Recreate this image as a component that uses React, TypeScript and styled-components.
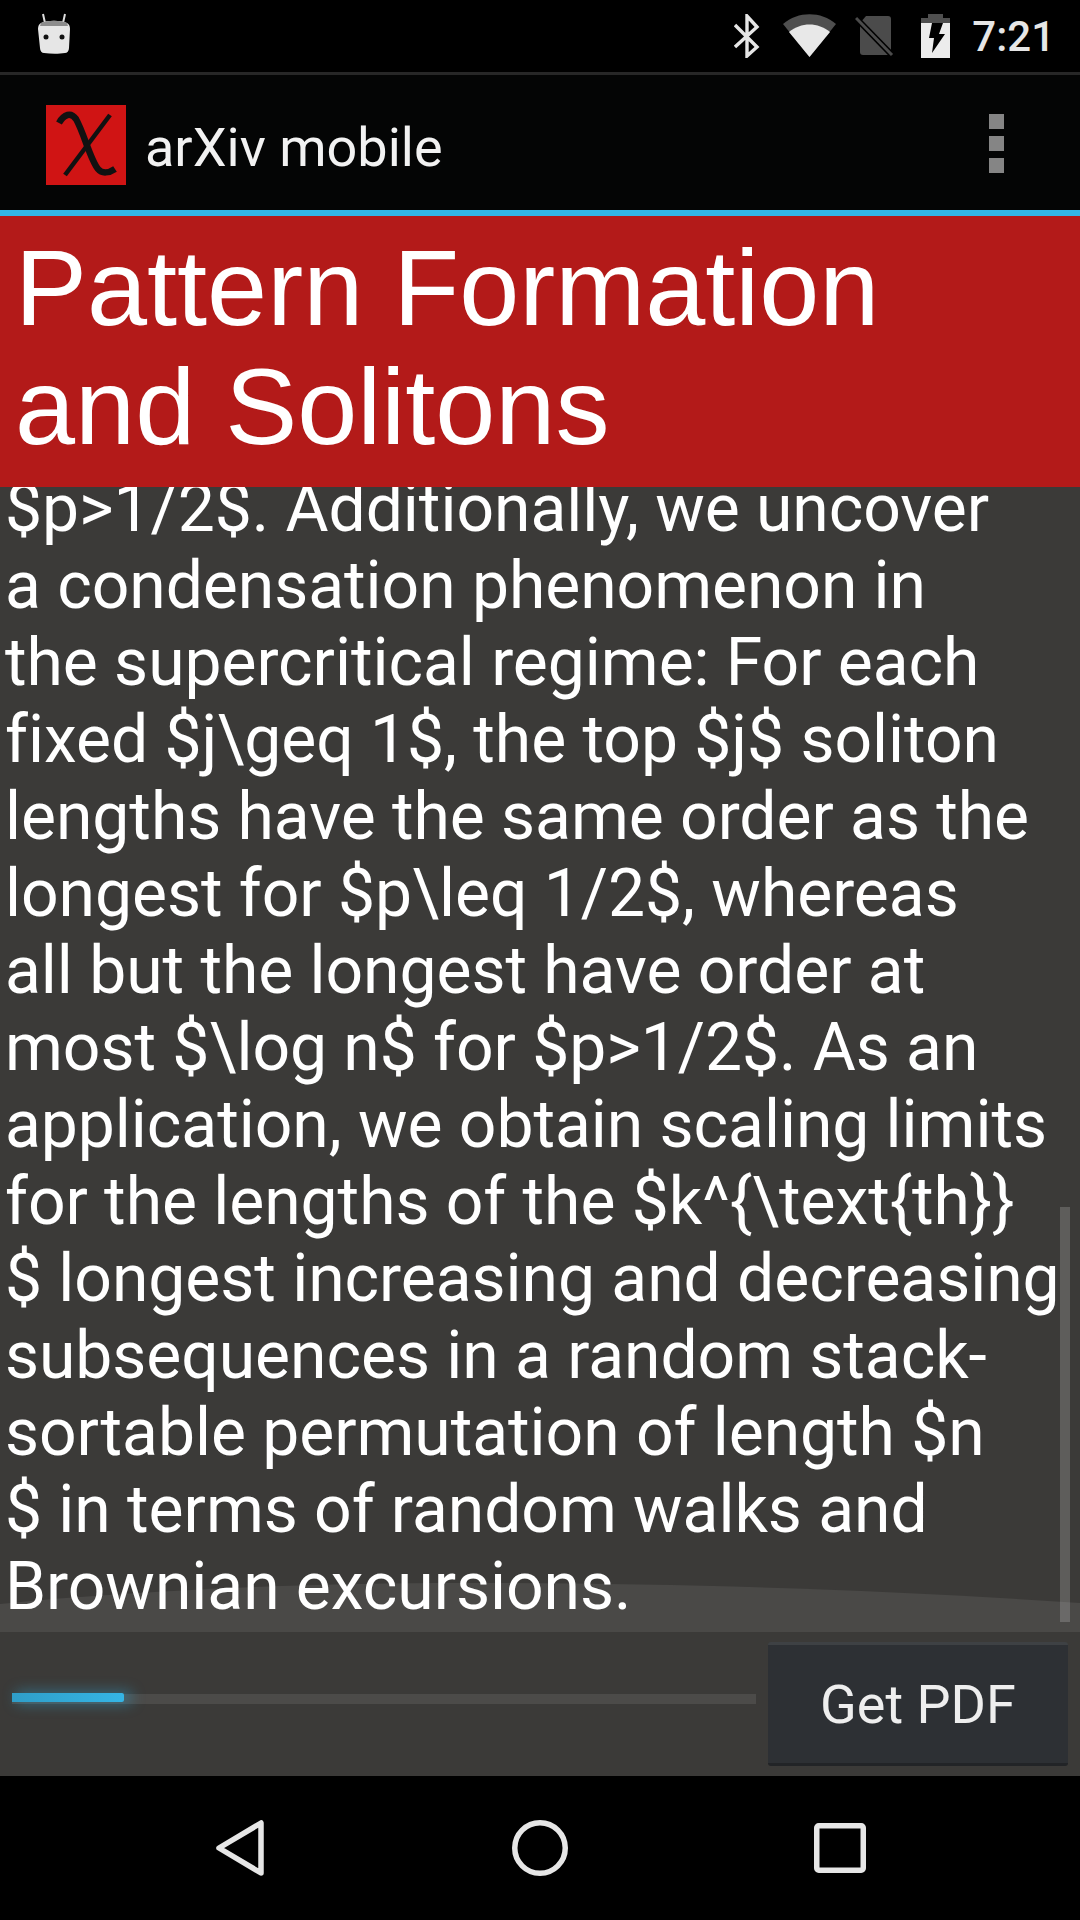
import React from 'react';
import styled, { createGlobalStyle } from 'styled-components';

const GlobalStyle = createGlobalStyle`
    html, body {
        margin: 0;
        padding: 0;
        background: #000;
    }
`;

const Screen = styled.div`
    width: 1080px;
    height: 1920px;
    display: flex;
    flex-direction: column;
    overflow: hidden;
    font-family: Roboto, sans-serif;
    background-color: #3b3a38;
`;

const StatusBar = styled.div`
    height: 72px;
    flex: none;
    display: flex;
    align-items: center;
    justify-content: space-between;
    padding: 0 25px 0 37px;
    background-color: #000;
    border-bottom: 3px solid #272727;
`;

const StatusGroup = styled.div`
    display: flex;
    align-items: center;
`;

const StatusIcon = styled.svg<{ $gap?: number }>`
    display: block;
    margin-left: ${(p) => p.$gap || 0}px;
`;

const NotificationIcon = styled.svg`
    display: block;
    margin-top: -4px;
`;

const Clock = styled.span`
    margin-left: 22px;
    font-size: 42px;
    font-weight: 500;
    color: #e6e6e6;
`;

const ActionBar = styled.div`
    height: 130px;
    flex: none;
    display: flex;
    align-items: center;
    padding: 5px 76px 0 46px;
    background-color: #040505;
    border-bottom: 6px solid #33b5e5;
`;

const AppTitle = styled.span`
    margin: 4px 0 0 19px;
    font-size: 54px;
    color: #f2f2f2;
    flex: 1;
`;

const OverflowMenu = styled.div`
    display: flex;
    flex-direction: column;
    gap: 7px;
    margin-top: -3px;
`;

const OverflowDot = styled.div`
    width: 15px;
    height: 15px;
    background-color: #858585;
`;

const TitleBanner = styled.h1`
    flex: none;
    height: 271px;
    box-sizing: border-box;
    margin: 0;
    padding: 12px 0 0 15px;
    background-color: #b31a19;
    color: #fff;
    font-family: "Liberation Sans", Arial, sans-serif;
    font-size: 108px;
    font-weight: 400;
    line-height: 119px;
`;

const TextPane = styled.div`
    position: relative;
    flex: 1;
    min-height: 0;
    overflow: hidden;
    display: flex;
    flex-direction: column;
    justify-content: flex-end;
    padding: 0 0 7px 5px;
`;

const Glow = styled.svg`
    position: absolute;
    left: 0;
    bottom: 0;
`;

const AbstractLine = styled.div`
    position: relative;
    flex: none;
    font-size: 66px;
    line-height: 77px;
    letter-spacing: -0.05px;
    color: #fff;
    white-space: pre;
`;

const ScrollThumb = styled.div`
    position: absolute;
    top: 720px;
    right: 10px;
    width: 10px;
    height: 415px;
    background-color: rgba(255, 255, 255, 0.18);
`;

const BottomBar = styled.div`
    height: 144px;
    flex: none;
    display: flex;
    align-items: center;
    padding: 0 12px;
    background-color: #3b3a38;
`;

const ProgressTrack = styled.div`
    position: relative;
    width: 744px;
    height: 10px;
    margin-bottom: 11px;
    background-color: #4c4b49;
`;

const ProgressFill = styled.div`
    position: absolute;
    left: 0;
    top: -1px;
    height: 9px;
    border-radius: 0 2px 2px 0;
    background: linear-gradient(90deg, #2f9ec9, #35b5e5);
    box-shadow: 6px 0 14px 2px rgba(51, 181, 229, 0.4);
`;

const PdfButton = styled.button`
    width: 300px;
    height: 124px;
    margin-left: 12px;
    padding: 0 0 0;
    border: 0;
    border-top: 3px solid #3e4144;
    border-bottom: 3px solid #222427;
    border-radius: 3px;
    background-color: #2d3034;
    color: #eee;
    font-family: Roboto, sans-serif;
    font-size: 54px;
`;

const NavBar = styled.div`
    height: 144px;
    flex: none;
    display: flex;
    align-items: center;
    justify-content: center;
    background-color: #000;
`;

const NavSlot = styled.div`
    width: 298px;
    display: flex;
    justify-content: center;
`;

const NavIcon = styled.svg<{ $nudge?: number }>`
    display: block;
    transform: translateX(${(p) => p.$nudge || 0}px);
`;

const ABSTRACT_LINES = [
    '$p>1/2$. Additionally, we uncover',
    'a condensation phenomenon in',
    'the supercritical regime: For each',
    'fixed $j\\geq 1$, the top $j$ soliton',
    'lengths have the same order as the',
    'longest for $p\\leq 1/2$, whereas',
    'all but the longest have order at',
    'most $\\log n$ for $p>1/2$. As an',
    'application, we obtain scaling limits',
    'for the lengths of the $k^{\\text{th}}',
    '$ longest increasing and decreasing',
    'subsequences in a random stack-',
    'sortable permutation of length $n',
    '$ in terms of random walks and',
    'Brownian excursions.',
];

function AndroidHead() {
    return (
        <NotificationIcon width="34" height="42" viewBox="0 0 34 42">
            <path d="M6 1l2 9M28 1l-2 9" stroke="#ddd" strokeWidth="2" fill="none" />
            <path d="M4 10c6-3 20-3 26 0 2 1 3 3 3 6l-1 19c0 3-2 5-4 5-6 1-14 1-21 0-2 0-4-2-4-5L1 16c0-3 1-5 3-6z" fill="#e6e6e6" />
            <path d="M4 10c6-3 20-3 26 0l1 3H3z" fill="#8c8c8c" />
            <circle cx="9" cy="24" r="2.5" fill="#111" />
            <circle cx="25" cy="24" r="2.5" fill="#111" />
        </NotificationIcon>
    );
}

function App() {
    return (
        <Screen>
            <GlobalStyle />
            <StatusBar>
                <AndroidHead />
                <StatusGroup>
                    <StatusIcon width="26" height="44" viewBox="0 0 26 44">
                        <path d="M1 33l22-20L13 2v40l10-9L1 11" stroke="#e6e6e6" strokeWidth="3.4" fill="none" />
                    </StatusIcon>
                    <StatusIcon $gap={23} width="53" height="44" viewBox="0 0 53 44">
                        <path d="M0 10C15-3 38-3 53 10L26.500 43z" fill="#4f4f4f" />
                        <path d="M6 18C18 8 35 8 47 18L26.500 43z" fill="#e8e8e8" />
                    </StatusIcon>
                    <StatusIcon $gap={19} width="39" height="42" viewBox="0 0 39 42">
                        <path d="M11 1h22c2 0 3 1 3 3v33c0 2-1 3-3 3H8c-2 0-3-1-3-3V8z" fill="#4b4b4b" />
                        <path d="M1 3l36 37" stroke="#000" strokeWidth="6" />
                        <path d="M1 3l36 37" stroke="#4b4b4b" strokeWidth="3" />
                    </StatusIcon>
                    <StatusIcon $gap={27} width="29" height="44" viewBox="0 0 29 44">
                        <path d="M7 0h15v4h7v6H0V4h7z" fill="#4f4f4f" />
                        <path d="M0 9h29v35H0z" fill="#ececec" />
                        <path d="M11 9h11l-4 11h6L11 39l2-15H8z" fill="#000" />
                    </StatusIcon>
                    <Clock>7:21</Clock>
                </StatusGroup>
            </StatusBar>
            <ActionBar>
                <svg width="80" height="80" viewBox="0 0 80 80">
                    <rect width="80" height="80" fill="#d01414" />
                    <path d="M13 18C18 9 25 7 30 14C38 28 44 54 52 64C56 69 63 68 69 64" stroke="#111" strokeWidth="6.500" fill="none" />
                    <path d="M64 10L19 70" stroke="#111" strokeWidth="4.500" fill="none" />
                </svg>
                <AppTitle>arXiv mobile</AppTitle>
                <OverflowMenu>
                    <OverflowDot />
                    <OverflowDot />
                    <OverflowDot />
                </OverflowMenu>
            </ActionBar>
            <TitleBanner>
                Pattern Formation
                <br />
                and Solitons
            </TitleBanner>
            <TextPane>
                <Glow width="1080" height="49" viewBox="0 0 1080 49">
                    <path d="M0 21C150 6 320 0 460 0C700 0 900 8 1080 20V49H0z" fill="#4a4947" />
                </Glow>
                {ABSTRACT_LINES.map((line) => (
                    <AbstractLine key={line}>{line}</AbstractLine>
                ))}
                <ScrollThumb />
            </TextPane>
            <BottomBar>
                <ProgressTrack>
                    <ProgressFill style={{ width: `${(112 / 744) * 100}%` }} />
                </ProgressTrack>
                <PdfButton>Get PDF</PdfButton>
            </BottomBar>
            <NavBar>
                <NavSlot>
                    <NavIcon $nudge={-2} width="48" height="56" viewBox="0 0 48 56">
                        <path d="M45 3v50L3 28z" stroke="#e6e6e6" strokeWidth="5.500" strokeLinejoin="round" fill="none" />
                    </NavIcon>
                </NavSlot>
                <NavSlot>
                    <NavIcon width="56" height="56" viewBox="0 0 56 56">
                        <circle cx="28" cy="28" r="25.250" stroke="#e6e6e6" strokeWidth="5.500" fill="none" />
                    </NavIcon>
                </NavSlot>
                <NavSlot>
                    <NavIcon $nudge={2} width="52" height="50" viewBox="0 0 52 50">
                        <rect x="2.750" y="2.750" width="46.500" height="44.500" rx="2" stroke="#e6e6e6" strokeWidth="5.500" fill="none" />
                    </NavIcon>
                </NavSlot>
            </NavBar>
        </Screen>
    );
}

export default App;
